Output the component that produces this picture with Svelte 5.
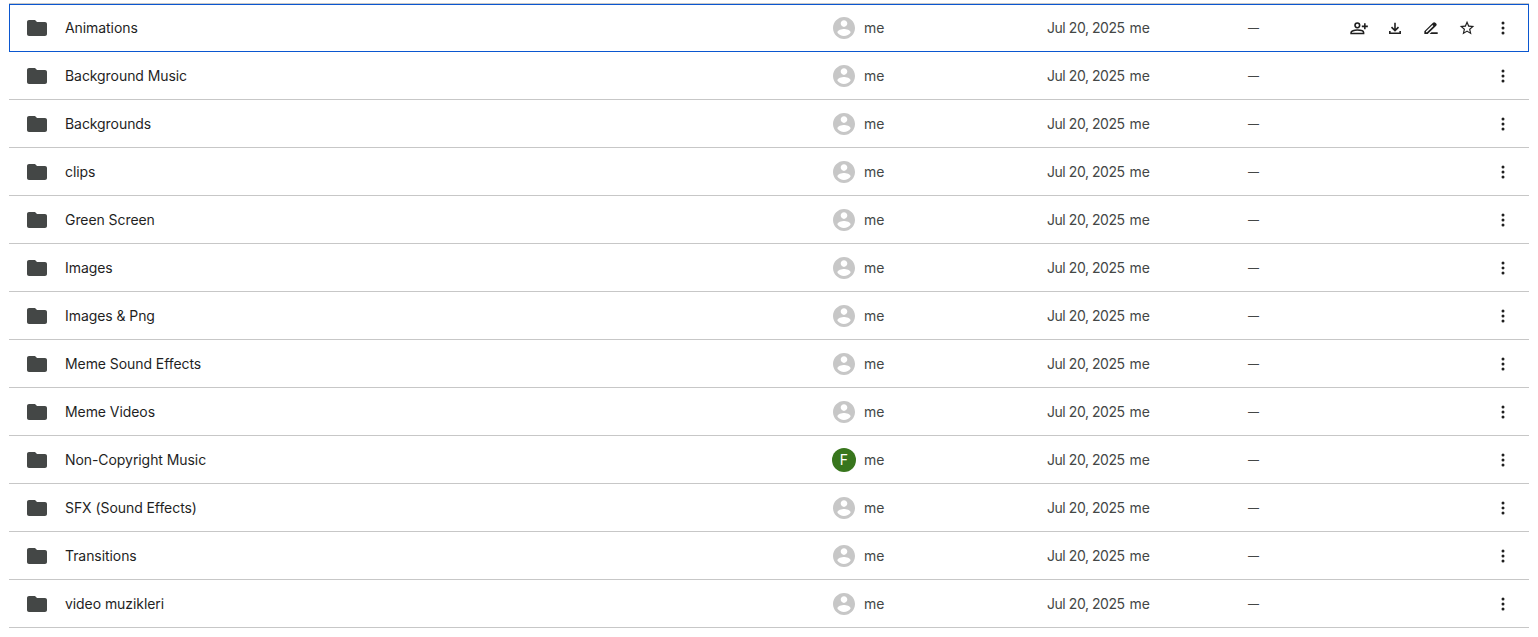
<script>
  const folders = [
    { name: 'Animations', selected: true },
    { name: 'Background Music' },
    { name: 'Backgrounds' },
    { name: 'clips' },
    { name: 'Green Screen' },
    { name: 'Images' },
    { name: 'Images & Png' },
    { name: 'Meme Sound Effects' },
    { name: 'Meme Videos' },
    { name: 'Non-Copyright Music', initial: 'F' },
    { name: 'SFX (Sound Effects)' },
    { name: 'Transitions' },
    { name: 'video muzikleri' }
  ];
</script>

<div class="list">
  {#each folders as folder}
    <div class="row" class:selected={folder.selected}>
      <div class="name">
        <svg class="folder" viewBox="0 0 24 24" width="24" height="24">
          <path d="M10 4H4c-1.1 0-1.99.9-1.99 2L2 18c0 1.1.9 2 2 2h16c1.1 0 2-.9 2-2V8c0-1.1-.9-2-2-2h-8l-2-2z"></path>
        </svg>
        <span>{folder.name}</span>
      </div>
      <div class="owner">
        {#if folder.initial}
          <div class="initial">{folder.initial}</div>
        {:else}
          <svg class="avatar" viewBox="2 2 20 20" width="22" height="22">
            <path d="M12 2C6.48 2 2 6.48 2 12s4.48 10 10 10 10-4.48 10-10S17.52 2 12 2zm0 3c1.66 0 3 1.34 3 3s-1.34 3-3 3-3-1.34-3-3 1.34-3 3-3zm0 14.2c-2.5 0-4.71-1.28-6-3.22.03-1.99 4-3.08 6-3.08 1.99 0 5.97 1.09 6 3.08-1.29 1.94-3.5 3.22-6 3.22z"></path>
          </svg>
        {/if}
        <span>me</span>
      </div>
      <div class="date"><span class="day">Jul 20, 2025</span><span class="by">me</span></div>
      <div class="size">—</div>
      <div class="actions">
        {#if folder.selected}
          <svg class="line" viewBox="0 0 24 24" width="20" height="20">
            <circle cx="10" cy="8.800" r="2.800"></circle>
            <path d="M2.500 18.500v-1.200c0-1.700 3.800-2.900 7.500-2.900s7.500 1.200 7.500 2.900v1.200z"></path>
            <path d="M19 6.400v7.200M15.400 10h7.200"></path>
          </svg>
          <svg class="line" viewBox="0 0 24 24" width="20" height="20">
            <path d="M12 5.600v9M7.800 11l4.200 4.200 4.200-4.200"></path>
            <path d="M5.800 15.500v2.700h12.400v-2.700"></path>
          </svg>
          <svg viewBox="0 0 24 24" width="20" height="20">
            <path d="M4 19.200v-3.400L14.400 5.600c.8-.8 2-.8 2.800 0l1 1c.8.8.8 2 0 2.800L8 19.200H4zm2-2h1.200l7.700-7.700-1.200-1.200L6 15.800v1.400z"></path>
            <path d="M12.500 17H20v2.200h-9.700z"></path>
          </svg>
          <svg viewBox="0 0 24 24" width="20" height="20">
            <path transform="translate(1.600 1.600) scale(.87)" d="M22 9.240l-7.190-.62L12 2 9.190 8.630 2 9.240l5.460 4.730L5.820 21 12 17.270 18.180 21l-1.630-7.030L22 9.240zM12 15.400l-3.760 2.270 1-4.280-3.320-2.880 4.380-.38L12 6.100l1.710 4.040 4.380.38-3.320 2.880 1 4.280L12 15.400z"></path>
          </svg>
        {/if}
        <svg viewBox="0 0 24 24" width="20" height="20">
          <circle cx="12" cy="6" r="1.800"></circle>
          <circle cx="12" cy="12" r="1.800"></circle>
          <circle cx="12" cy="18" r="1.800"></circle>
        </svg>
      </div>
    </div>
  {/each}
</div>

<style>
  :global(body) {
    background: #ffffff;
    font-family: Inter, "Open Sans", sans-serif;
  }

  .list {
    margin: 3px 9px 0 9px;
    border-top: 1px solid #c7c7c7;
    font-size: 14px;
    line-height: 16px;
  }

  .row {
    display: grid;
    grid-template-columns: 823px 215px 201px 1fr auto;
    align-items: center;
    height: 48px;
    box-sizing: border-box;
    border-bottom: 1px solid #c7c7c7;
    color: #444746;
    padding-top: 1px;
  }

  .row.selected {
    outline: 1px solid #0b57d0;
    outline-offset: -1px;
    border-bottom-color: transparent;
  }

  .name {
    display: flex;
    align-items: center;
    color: #1f1f1f;
    padding-left: 16px;
    gap: 16px;
    letter-spacing: -0.07px;
  }

  .folder {
    fill: #444746;
  }

  .owner {
    display: flex;
    align-items: center;
    gap: 9px;
  }

  .avatar {
    fill: #c7c7c7;
    margin-left: 1px;
  }

  .initial {
    width: 24px;
    height: 24px;
    border-radius: 50%;
    background: #38761d;
    color: #ffffff;
    font-size: 14px;
    line-height: 24px;
    text-align: center;
    margin-right: -1px;
  }

  .day {
    letter-spacing: -0.45px;
  }

  .by {
    margin-left: 5px;
  }

  .size {
    font-size: 11px;
  }

  .actions {
    display: flex;
    align-items: center;
    gap: 16px;
    padding-right: 16px;
    height: 36px;
  }

  .actions svg {
    fill: #1f1f1f;
  }

  .actions .line {
    fill: none;
    stroke: #1f1f1f;
    stroke-width: 1.900;
  }
</style>
